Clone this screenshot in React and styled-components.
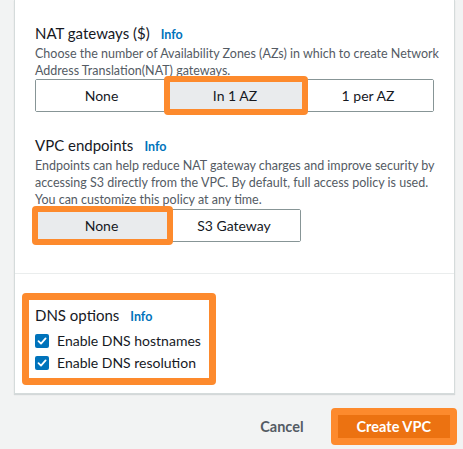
import React from "react";
import styled, { createGlobalStyle } from "styled-components";

const Global = createGlobalStyle`
  html, body { margin: 0; padding: 0; background: #f2f3f3; }
  body { font-family: Lato, "Noto Sans", Arial, sans-serif; color: #16191f; -webkit-font-smoothing: antialiased; }
  * { box-sizing: border-box; }
`;

const ORANGE = "#fd8a2d";

const Page = styled.div`
  width: 463px;
  height: 449px;
  padding: 0 8px 0 14px;
  display: flex;
  flex-direction: column;
  overflow: hidden;
`;

const Panel = styled.div`
  background: #fff;
  border: 1px solid #d5dbdb;
  border-top: none;
  box-shadow: 0 1px 1px 0 rgba(0, 28, 36, 0.12);
`;

const Section = styled.div`
  padding: ${(p) => p.$pad};
  display: flex;
  flex-direction: column;
  align-items: flex-start;
`;

const Field = styled.div`
  display: flex;
  flex-direction: column;
  align-items: flex-start;
  margin-top: ${(p) => p.$mt || 0}px;
`;

const TitleRow = styled.div`
  display: flex;
  align-items: baseline;
  gap: 11px;
  line-height: 22px;
  margin-bottom: ${(p) => p.$mb || 0}px;
`;

const Title = styled.span`
  font-size: 15px;
  color: #16191f;
`;

const Info = styled.a`
  font-size: 12.5px;
  font-weight: 700;
  color: #0073bb;
  text-decoration: none;
`;

const Description = styled.p`
  margin: 0;
  font-size: 12.5px;
  line-height: 16.7px;
  color: #545b64;
  white-space: nowrap;
`;

const Segments = styled.div`
  display: flex;
  border: 1px solid #879596;
  border-radius: 2px;
`;

const Segment = styled.button`
  position: relative;
  width: ${(p) => p.$w}px;
  height: 31px;
  border: none;
  border-left: ${(p) => (p.$first ? "none" : "1px solid #879596")};
  background: ${(p) => (p.$selected ? "#e9ebed" : "#fff")};
  font-family: inherit;
  font-size: 14px;
  color: #16191f;
  padding: 0;
  cursor: pointer;

  &::after {
    content: "";
    display: ${(p) => (p.$marked ? "block" : "none")};
    position: absolute;
    top: -4px;
    bottom: -4px;
    left: -4px;
    right: -6px;
    border: 6px solid ${ORANGE};
    border-radius: 4px;
    z-index: 1;
    pointer-events: none;
  }
`;

const Divider = styled.hr`
  margin: 0;
  border: none;
  border-top: 1px solid #eaeded;
`;

const Marked = styled.div`
  border: 7px solid ${ORANGE};
  border-radius: 4px;
  padding: ${(p) => p.$pad || 0};
  display: flex;
  flex-direction: column;
`;

const CheckRow = styled.label`
  display: flex;
  align-items: center;
  gap: 8px;
  font-size: 14px;
  line-height: 22px;
  color: #16191f;
`;

const Box = styled.span`
  width: 14px;
  height: 14px;
  border-radius: 2px;
  background: #0073bb;
  display: inline-flex;
  align-items: center;
  justify-content: center;
`;

const Footer = styled.div`
  display: flex;
  justify-content: flex-end;
  align-items: center;
  gap: 27px;
  margin-top: 14px;
  margin-right: -2px;
`;

const LinkButton = styled.button`
  border: none;
  background: none;
  padding: 0;
  font-family: inherit;
  font-size: 14.5px;
  font-weight: 700;
  color: #545b64;
`;

const Primary = styled.button`
  border: none;
  height: 23px;
  padding: 0 19px;
  background: #ec7211;
  color: #fff;
  font-family: inherit;
  font-size: 14.5px;
  font-weight: 700;
`;

const Check = () => (
  <Box>
    <svg width="10" height="10" viewBox="0 0 10 10">
      <path d="M1.5 5.2 L4 7.6 L8.6 2.4" fill="none" stroke="#fff" strokeWidth="1.8" strokeLinecap="round" strokeLinejoin="round" />
    </svg>
  </Box>
);

export default function App() {
  return (
    <>
      <Global />
      <Page>
        <Panel>
          <Section $pad="22px 20px 31px 20px">
            <Field>
              <TitleRow>
                <Title>NAT gateways ($)</Title>
                <Info>Info</Info>
              </TitleRow>
              <Description>
                Choose the number of Availability Zones (AZs) in which to create Network
                <br />
                Address Translation(NAT) gateways.
              </Description>
              <Segments>
                <Segment $w={131} $first>None</Segment>
                <Segment $w={135} $selected $marked>In 1 AZ</Segment>
                <Segment $w={131}>1 per AZ</Segment>
              </Segments>
            </Field>
            <Field $mt={22}>
              <TitleRow>
                <Title>VPC endpoints</Title>
                <Info>Info</Info>
              </TitleRow>
              <Description>
                Endpoints can help reduce NAT gateway charges and improve security by
                <br />
                accessing S3 directly from the VPC. By default, full access policy is used.
                <br />
                You can customize this policy at any time.
              </Description>
              <Segments>
                <Segment $w={131} $first $selected $marked>None</Segment>
                <Segment $w={133}>S3 Gateway</Segment>
              </Segments>
            </Field>
          </Section>
          <Divider />
          <Section $pad="19px 20px 8px 7px">
            <Marked $pad="4px 8px 4px 6px">
              <TitleRow $mb={2}>
                <Title>DNS options</Title>
                <Info>Info</Info>
              </TitleRow>
              <CheckRow><Check />Enable DNS hostnames</CheckRow>
              <CheckRow><Check />Enable DNS resolution</CheckRow>
            </Marked>
          </Section>
        </Panel>
        <Footer>
          <LinkButton>Cancel</LinkButton>
          <Marked>
            <Primary>Create VPC</Primary>
          </Marked>
        </Footer>
      </Page>
    </>
  );
}
